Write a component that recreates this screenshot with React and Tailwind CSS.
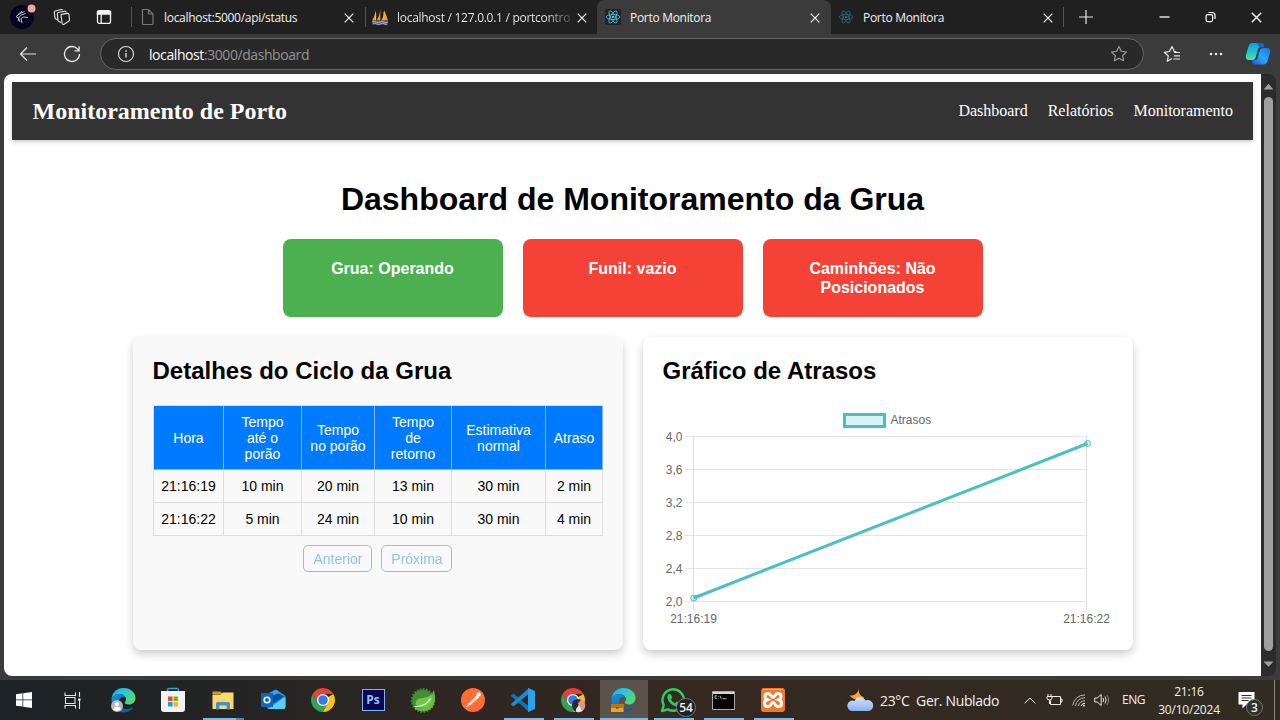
import React from "react";

const X = ({ s = 10, w = 1.2 }) => (
  <svg width={s} height={s} viewBox="0 0 10 10" className="shrink-0">
    <path d="M.7 .7L9.3 9.3M9.3 .7L.7 9.3" stroke="#f0f0f0" strokeWidth={w} fill="none" />
  </svg>
);

const ReactMark = ({ dim, bg }) => (
  <svg width="16" height="16" viewBox="0 0 16 16" className="shrink-0">
    {bg && <rect width="16" height="16" rx="2" fill="#20232a" />}
    <g stroke={dim ? "#2f6673" : "#58c4dc"} strokeWidth=".8" fill="none">
      <ellipse cx="8" cy="8" rx="6.8" ry="2.6" />
      <ellipse cx="8" cy="8" rx="6.8" ry="2.6" transform="rotate(60 8 8)" />
      <ellipse cx="8" cy="8" rx="6.8" ry="2.6" transform="rotate(120 8 8)" />
    </g>
    <circle cx="8" cy="8" r="1.3" fill={dim ? "#2f6673" : "#58c4dc"} />
  </svg>
);

function TabStrip() {
  return (
    <div className="flex h-[34px] items-center bg-[#202020] text-[12px] tracking-[-0.3px] text-[#f2f2f2]">
      <div className="flex w-[131px] shrink-0 items-center pl-[10px]">
        <svg width="26" height="26" viewBox="0 0 26 26" className="shrink-0">
          <circle cx="12" cy="13" r="12" fill="#05031d" />
          <g fill="none" stroke="#c4c4cc" strokeWidth="1">
            <path d="M14.500 7.500L10 9.500l-4 3 2 1.500M15.500 9.500l-4.500 1.700-2.500 2.800 1.500 4M18 13.500l-4.500-.5-2.500 1.500 1 4.500M12 7l-4 3.500M9 13l-1 4" />
          </g>
          <circle cx="21.500" cy="4.500" r="4" fill="#f0a8a4" />
        </svg>
        <svg width="18" height="18" viewBox="0 0 18 18" className="ml-[17px] shrink-0" fill="none" stroke="#e6e6e6" strokeWidth="1.100" strokeLinejoin="round">
          <path d="M9.300 6.100l5.200-.7c.9-.1 1.400.4 1.500 1.100l.5 5.300c.1.700-.3 1.200-.9 1.500l-4.500 2.900c-.8.500-1.700.2-1.900-.7L8.100 7.800c-.2-1 .2-1.600 1.200-1.700z" />
          <path d="M8 14.400l-2-.9c-.6-.2-.9-.7-1-1.200L4.300 6c-.1-.8.200-1.300 1-1.500l6.200-1.300c.9-.2 1.500.3 1.700 1.300" />
          <path d="M4.700 12l-1.800-.9c-.5-.3-.8-.7-.9-1.300l-.7-5.300c-.1-.8.2-1.300 1-1.500l5.800-1.500c.8-.2 1.300.1 1.600.8" />
        </svg>
        <svg width="16" height="16" viewBox="0 0 16 16" className="ml-[25px] shrink-0" fill="none" stroke="#f4f4f4" strokeWidth="1.300">
          <rect x="1.500" y="1.600" width="13" height="12.800" rx="2" />
          <path d="M1.500 2.500h13v2.600h-13z" fill="#f4f4f4" />
          <path d="M5.200 5v9" />
        </svg>
      </div>
      <div className="flex w-[234px] shrink-0 items-center border-l border-[#555] h-5 pl-[8px]">
        <svg width="16" height="18" viewBox="0 0 16 18" className="shrink-0" fill="none" stroke="#777" strokeWidth="1.200">
          <path d="M2.500 1.500h6l4.500 4.500v9.500q0 1-1 1h-8.500q-1 0-1-1zM8.500 1.500v4.500h4.500" />
        </svg>
        <span className="ml-2 w-[180px] whitespace-nowrap pt-px">localhost:5000/api/status</span>
        <span className="flex pt-px"><X /></span>
      </div>
      <div className="flex w-[232px] shrink-0 items-center border-l border-[#555] h-5 pl-[5px]">
        <svg width="18" height="18" viewBox="0 0 18 18" className="shrink-0">
          <path d="M1 12.500C2.800 9.500 4.200 6 5 2v10.500zM5.700 12.500C8 8.500 9 5 9.300 .8v11.700zM10.200 12.500c2-3 2.700-6.500 2.800-10.500C14.500 5 16 9 17 12.500z" fill="#f09a22" />
          <path d="M4.700 5v7M13 4v8" stroke="#ffd57c" strokeWidth=".7" />
          <path d="M1 12.800h16l-1 3.700H2z" fill="#4e5a90" />
          <path d="M1 14q2-1.500 4 0t4 0 4 0 4 0M1.500 16q2-1.500 4 0t4 0 4 0 3 0" stroke="#b6bde0" strokeWidth=".9" fill="none" />
        </svg>
        <span className="ml-[8px] w-[174px] whitespace-nowrap bg-gradient-to-r from-[#f2f2f2] from-85% to-[#4a4a4a] to-100% bg-clip-text pt-px tracking-[-0.28px] text-transparent">localhost / 127.0.0.1 / portcontro</span>
        <span className="ml-[6px] flex pt-px"><X /></span>
      </div>
      <div className="flex h-[34px] w-[234px] shrink-0 items-center rounded-t-lg bg-[#3b3b3b] pl-[8px]">
        <ReactMark bg />
        <span className="ml-[9px] w-[180px] whitespace-nowrap pt-px">Porto Monitora</span>
        <span className="flex pt-px"><X /></span>
      </div>
      <div className="flex h-5 w-[233px] shrink-0 items-center border-r border-[#555] pl-[7px]">
        <ReactMark dim />
        <span className="ml-[9px] w-[180px] whitespace-nowrap pt-px">Porto Monitora</span>
        <span className="flex pt-px"><X /></span>
      </div>
      <svg width="14" height="14" viewBox="0 0 14 14" className="ml-[15px] shrink-0"><path d="M7 0v14M0 7h14" stroke="#e8e8e8" strokeWidth="1.200" /></svg>
      <svg width="11" height="10" viewBox="0 0 11 10" className="ml-[66px] shrink-0"><path d="M.5 5h10" stroke="#fff" strokeWidth="1.300" /></svg>
      <svg width="11" height="12" viewBox="0 0 11 12" className="ml-[35px] shrink-0" fill="none" stroke="#fff" strokeWidth="1.200">
        <rect x="1.100" y="3.600" width="6.500" height="7" rx="1.500" /><path d="M3.500 1.500h3.500q3 0 3 3v3.500" />
      </svg>
      <span className="ml-[35px] flex"><X s={11} w={1.4} /></span>
    </div>
  );
}

const STAR = "M9 1.600l2.250 4.700 5.150.7-3.750 3.600.9 5.100L9 13.250 4.450 15.700l.9-5.100L1.600 7l5.150-.7z";

function AddressBar() {
  return (
    <div className="flex h-[40px] items-center bg-[#3b3b3b]">
      <svg width="18" height="16" viewBox="0 0 18 16" className="ml-[19px] shrink-0" fill="none" stroke="#e6e6e6" strokeWidth="1.200"><path d="M17 8H1.500M8 1.500L1.500 8 8 14.500" /></svg>
      <svg width="18" height="18" viewBox="0 0 18 18" className="ml-[26px] shrink-0" fill="none" stroke="#e6e6e6" strokeWidth="1.300"><path d="M16.500 9A7.500 7.500 0 1 1 14.600 4l1.400 1.700M16.100 1.200v4.700h-4.600" /></svg>
      <div className="ml-[19px] flex h-[32px] w-[1044px] shrink-0 items-center rounded-full border border-[#666] bg-[#292929] pl-[16px] pr-[15px]">
        <svg width="18" height="18" viewBox="0 0 18 18" fill="none" stroke="#dcdcdc" strokeWidth="1.100" className="shrink-0"><circle cx="9" cy="9" r="7.500" /><path d="M9 8v4.600M9 5.200v1.500" strokeWidth="1.400" /></svg>
        <span className="ml-[14px] grow whitespace-nowrap text-[14px] tracking-[-0.42px] text-[#949494]"><span className="text-white">localhost</span>:3000/dashboard</span>
        <svg width="18" height="18" viewBox="0 0 18 18" fill="none" stroke="#a0a0a0" strokeWidth="1.100" strokeLinejoin="round"><path d={STAR} /></svg>
      </div>
      <svg width="18" height="18" viewBox="0 0 18 18" className="ml-[19px] shrink-0" fill="none" stroke="#e8e8e8" strokeWidth="1.200" strokeLinejoin="round">
        <path d="M9 13.600L4.300 16.300l1-5.300L1.300 7.300l5.100-.8L9 1.600l2.300 4.900h2M11 7.500h6M11 10.800h6M10.500 14h6.500" />
      </svg>
      <svg width="16" height="4" viewBox="0 0 16 4" className="ml-[27px] shrink-0" fill="#e8e8e8"><circle cx="3" cy="2" r="1.300" /><circle cx="8" cy="2" r="1.300" /><circle cx="13" cy="2" r="1.300" /></svg>
      <svg width="26" height="24" viewBox="0 0 26 24" className="ml-[21px] shrink-0">
        <defs>
          <linearGradient id="cpA" x1="0" y1="0" x2="0" y2="1"><stop stopColor="#169ce5" /><stop offset=".6" stopColor="#22c9d0" /><stop offset="1" stopColor="#65dc8f" /></linearGradient>
          <linearGradient id="cpB" x1="1" y1="0" x2="0" y2="1"><stop stopColor="#1b6fe0" /><stop offset=".5" stopColor="#2aa8ff" /><stop offset="1" stopColor="#1459d4" /></linearGradient>
        </defs>
        <path d="M8 1h8c2 0 2.500 1.500 3 4h-3c-2 0-2.700 1-3.200 3l-1.800 7c-.5 2-1.500 3-3.500 3H4c-3 0-3.500-2.500-3-5l2.500-8.500C4.300 2 5.500 1 8 1z" fill="url(#cpA)" />
        <path d="M12 1h4c2 0 2.500 1.500 3 4h-3.500c-2 0-2.500-1-3.500-4z" fill="#0c6dc8" />
        <path d="M18 6h4c3 0 3.600 2.500 3 5l-2.500 8c-.8 2.500-2 3.500-4.500 3.500h-8c-2 0-2.500-1.500-3-4.500h2.500c2 0 2.700-1 3.200-3l1.800-6c.5-2 1.500-3 3.500-3z" fill="url(#cpB)" />
        <path d="M12.800 8.500c.5-1.800 1.500-2.500 3.200-2.500h2c-2 0-3 1-3.500 3l-1.800 6c-.5 2-1.200 3-3.200 3H8c1.800-.2 2.600-1.200 3-3z" fill="#38404c" />
      </svg>
    </div>
  );
}

const columns = [
  { lines: ["Hora"], w: "w-[70px]" },
  { lines: ["Tempo", "até o", "porão"], w: "w-[78px]" },
  { lines: ["Tempo", "no porão"], w: "w-[73px]" },
  { lines: ["Tempo", "de", "retorno"], w: "w-[77px]" },
  { lines: ["Estimativa", "normal"], w: "w-[94px]" },
  { lines: ["Atraso"], w: "w-[57px]" },
];
const rows = [
  ["21:16:19", "10 min", "20 min", "13 min", "30 min", "2 min"],
  ["21:16:22", "5 min", "24 min", "10 min", "30 min", "4 min"],
];

function CycleTable() {
  return (
    <table className="mt-[20px] w-[450px] table-fixed border-separate border-spacing-0 border-t border-l border-[#ddd] text-center text-[14px] leading-[16px]">
      <thead>
        <tr className="h-[64px] bg-[#007bff] text-white">
          {columns.map(({ lines, w }) => (
            <th key={lines.join(" ")} className={`${w} border-r border-b border-[#ddd]/60 p-0 pl-px font-normal`}>
              {lines.map((l) => <div key={l}>{l}</div>)}
            </th>
          ))}
        </tr>
      </thead>
      <tbody>
        {rows.map((r) => (
          <tr key={r[0]} className="h-[33px]">
            {r.map((c, i) => <td key={i} className="border-r border-b border-[#ddd] p-0 pl-px">{c}</td>)}
          </tr>
        ))}
      </tbody>
    </table>
  );
}

const ticks = [["4,0", 436.5], ["3,6", 469.8], ["3,2", 502.7], ["2,8", 535.6], ["2,4", 568.9], ["2,0", 601.8]];

function DelayChart() {
  return (
    <svg width="450" height="225" viewBox="663 405 450 225" className="mt-[20px] block" fontFamily="Liberation Sans, Arial, sans-serif" fontSize="12" fill="#666">
      <rect x="844.500" y="414.500" width="40" height="12" fill="#dbf2f2" stroke="#4bc0c0" strokeWidth="3" />
      <text x="890.500" y="424">Atrasos</text>
      {ticks.map(([t, y]) => (
        <g key={t}>
          <path d={`M685 ${Math.floor(y) + 0.5}H1087`} stroke="#e5e5e5" />
          <text x="682.500" y={Math.round(y) + 3.500} textAnchor="end">{t}</text>
        </g>
      ))}
      <path d="M693.500 436.500V610M1086.500 436.500V610" stroke="#dedede" />
      <path d="M693.800 598L1087.500 443.500" stroke="#4bc0c0" strokeWidth="3" />
      <g fill="#4bc0c0" fillOpacity=".2" stroke="#4bc0c0"><circle cx="693.800" cy="598" r="3" /><circle cx="1087.500" cy="443.500" r="3" /></g>
      <text x="693.500" y="623" textAnchor="middle">21:16:19</text>
      <text x="1086.500" y="623" textAnchor="middle">21:16:22</text>
    </svg>
  );
}

const statuses = [
  ["Grua: Operando", "bg-[#4caf50]"],
  ["Funil: vazio", "bg-[#f44336]"],
  ["Caminhões: Não Posicionados", "bg-[#f44336]"],
];

function Page() {
  return (
    <div className="h-[602px] w-[1257px] shrink-0 overflow-hidden rounded-l-[8px] bg-white px-[8px] pt-[8px] text-black">
      <header className="flex h-[58px] items-center justify-between bg-[#333] pr-[20px] pl-[20.5px] font-['Liberation_Serif',serif] text-white shadow-[0_2px_4px_rgba(0,0,0,0.2)]">
        <span className="text-[24px] font-bold">Monitoramento de Porto</span>
        <nav className="flex gap-[20px] text-[16px]"><a>Dashboard</a><a>Relatórios</a><a>Monitoramento</a></nav>
      </header>
      <main className="flex flex-col items-center font-['Liberation_Sans',Arial,sans-serif]">
        <h1 className="mt-[39px] h-[40px] whitespace-nowrap text-[32px] leading-[40px] font-bold">Dashboard de Monitoramento da Grua</h1>
        <div className="mt-[20px] flex gap-[20px]">
          {statuses.map(([t, c]) => (
            <div key={t} className={`${c} h-[78px] w-[220px] rounded-[8px] px-[20px] pt-[20px] text-center text-[16px] leading-[19px] font-bold text-white`}>{t}</div>
          ))}
        </div>
        <div className="mt-[20px] flex gap-[20px]">
          <section className="h-[313px] w-[490px] rounded-[8px] bg-[#f9f9f9] p-[20px] shadow-[0_4px_8px_rgba(0,0,0,0.2)]">
            <h2 className="h-[28px] text-[24px] leading-[28px] font-bold">Detalhes do Ciclo da Grua</h2>
            <CycleTable />
            <div className="mt-[9px] flex justify-center gap-[9px] text-[14px] leading-[24px] text-[#007bff] opacity-45">
              <button className="h-[27px] w-[69px] rounded-[5px] border border-[#007bff] pl-px">Anterior</button>
              <button className="h-[27px] w-[71px] rounded-[5px] border border-[#007bff] pl-px">Próxima</button>
            </div>
          </section>
          <section className="h-[313px] w-[490px] rounded-[8px] bg-white p-[20px] shadow-[0_4px_8px_rgba(0,0,0,0.2)]">
            <h2 className="h-[28px] text-[24px] leading-[28px] font-bold">Gráfico de Atrasos</h2>
            <DelayChart />
          </section>
        </div>
      </main>
    </div>
  );
}

function ScrollBar() {
  return (
    <div className="flex h-[602px] w-[15px] shrink-0 flex-col items-center justify-between rounded-r-[8px] bg-[#2b2b2b] py-[9px]">
      <svg width="11" height="7" viewBox="0 0 11 7"><path d="M.5 6.500L5.500.7l5 5.800z" fill="#9f9f9f" /></svg>
      <div className="mt-[7px] mb-[9px] w-[9px] grow rounded-full bg-[#9f9f9f]" />
      <svg width="11" height="7" viewBox="0 0 11 7"><path d="M.5 1.500L5.500 6.800l5-5.300z" fill="#9f9f9f" /></svg>
    </div>
  );
}

const EdgeIcon = ({ id, children }) => (
  <svg width="26" height="26" viewBox="0 0 26 26">
    <defs>
      <linearGradient id={id + "a"} x1="0" y1="0" x2="1" y2=".5"><stop stopColor="#2aa8e8" /><stop offset=".55" stopColor="#2fc7d8" /><stop offset="1" stopColor="#58d66c" /></linearGradient>
      <linearGradient id={id + "b"} x1="0" y1="0" x2="1" y2="1"><stop stopColor="#1597df" /><stop offset="1" stopColor="#0c4e9c" /></linearGradient>
    </defs>
    <path d="M1.500 12C2 5.500 7 1 13.500 1 20.500 1 25.500 5.500 25.500 11c0 4-3 6.500-6.500 6.500-3 0-4.800-1-4.300-2.200.8-1 1.300-2 1.300-3C16 9 12.500 7 9 7c-3.500 0-6 1.800-7.500 5z" fill={`url(#${id}a)`} />
    <path d="M1.500 12C3 8.500 5.500 7 9 7c2.800 0 5 1 6.200 3-4.700-.5-6.700 2.500-6.200 6 .6 4.500 5 6.800 9.500 5.800 2-.5 4-1.500 4.500-1.200.5.500-2.500 4.500-8.500 4.900C7 25.700 1 20 1.500 12z" fill={`url(#${id}b)`} />
    {children}
  </svg>
);

const Chrome = ({ children }) => (
  <svg width="26" height="26" viewBox="0 0 26 26">
    <path d="M13 13L23.390 7A12 12 0 0 1 13 25z" fill="#fbc116" />
    <path d="M13 7.000h10.390A12 12 0 0 0 2.610 7l5 8.500z" fill="#e94235" />
    <path d="M18.200 16L13 25A12 12 0 0 1 2.610 7L7.800 16 13 19z" fill="#32a350" />
    <circle cx="13" cy="13" r="6.100" fill="#fff" /><circle cx="13" cy="13" r="4.800" fill="#3b78e7" />
    {children}
  </svg>
);

const apps = [
  { id: "edge", icon: <EdgeIcon id="e1"><circle cx="7" cy="19" r="6" fill="#b8b8b8" /><circle cx="7" cy="17.200" r="2" fill="#fff" /><path d="M3.200 22.300q0-2.500 3.800-2.500t3.800 2.500a5 5 0 0 1-7.600 0z" fill="#fff" /></EdgeIcon> },
  { id: "store", icon: (
    <svg width="26" height="26" viewBox="0 0 26 26"><path d="M7.500 5V3q0-1.500 1.500-1.500h8q1.500 0 1.500 1.500v2" fill="none" stroke="#27a2da" strokeWidth="1.500" /><path d="M1 4h24v18q0 3-3 3H4q-3 0-3-3z" fill="#f2f2f2" /><path d="M8 9.500h4.500V14H8z" fill="#e64a22" /><path d="M13.500 9.500H18V14h-4.500z" fill="#7ab51d" /><path d="M8 15h4.500v4.500H8z" fill="#10a0e6" /><path d="M13.500 15H18v4.500h-4.500z" fill="#f9b516" /></svg>) },
  { id: "files", open: "double", icon: (
    <svg width="24" height="24" viewBox="0 0 24 24"><path d="M1.500 3.500h8l2 2.500h-10z" fill="#d69a1c" /><path d="M1.500 6.500h8L12 4.500h10.500V21H1.500z" fill="#ffd96b" /><path d="M5 21.500v-6q0-1.500 1.500-1.500h11q1.500 0 1.500 1.500v6h-3.500v-4h-7v4z" fill="#3f91cf" /></svg>) },
  { id: "mail", icon: (
    <svg width="26" height="26" viewBox="0 0 26 26"><path d="M5 8l11-5.500L25.500 9 20 15z" fill="#1581d4" /><path d="M9 6l7-3.500 9 6.500-5 4z" fill="#2da5e8" /><path d="M7 11h18.500v9q0 2-2 2H9q-2 0-2-2z" fill="#1d8fe0" /><path d="M25.500 9.500v10q0 2.500-2 2.500H8z" fill="#58d0f2" /><path d="M10 9l9-2.500 5 3L11 18z" fill="#0c4f9c" /><path d="M1 6h12v14H2.500Q1 20 1 18.500z" fill="#1066b8" /><circle cx="7" cy="13" r="2.800" fill="none" stroke="#fff" strokeWidth="1.600" /></svg>) },
  { id: "chrome", icon: <Chrome /> },
  { id: "photo", icon: <span className="flex h-[22px] w-[23px] items-center justify-center border-[1.5px] border-[#78b8f0] bg-[#0a0653] text-[12px] font-bold text-[#8cc4f8]">Ps</span> },
  { id: "leaf", icon: (
    <svg width="26" height="26" viewBox="0 0 26 26"><circle cx="13" cy="13.500" r="10.800" fill="#3f8f35" /><circle cx="13" cy="13.500" r="11.300" fill="none" stroke="#3f8f35" strokeWidth="2" strokeDasharray="1.700 1.400" /><path d="M23.500 3C26 9 25.500 16 22 20.500 18 25 9 25.500 4 21c12 .5 17-7 19.500-18z" fill="#68b842" /><path d="M21.500 7c1.500 6 .3 11-5 12.500-3.500 1-8 .3-10.500-1.500-1-5 2-6.500 7-7 3.500-.3 6.500-1.500 8.500-4z" fill="#74c64b" /><path d="M4.500 19.500c7 .6 12.500-2 16-8" fill="none" stroke="#eef8e6" strokeWidth="1.200" /></svg>) },
  { id: "rocket", icon: (
    <svg width="26" height="26" viewBox="0 0 26 26"><circle cx="13" cy="13" r="12" fill="#ff6c37" /><path d="M8.500 16.500l8.500-8 1.500 2-8.500 7.500zM6 20l3.500-3" fill="#fff" stroke="#fff" strokeWidth="1" /><circle cx="18.700" cy="7.500" r="2.200" fill="#fff" /><path d="M10 15.700l6-5.200M11.500 16.800l5-4.500" stroke="#ff6c37" strokeWidth=".6" /></svg>) },
  { id: "code", open: "single", icon: (
    <svg width="26" height="26" viewBox="0 0 26 26"><path d="M1 8.500l2.500-2L19 19.500V25L1.500 9.500z" fill="#1273b8" /><path d="M1 17.500l2.500 2L19 6.500V1L1.500 16.500z" fill="#1b8bd2" /><path d="M18 1l7 3v18l-7 3V1z" fill="#2ba3ec" /></svg>) },
  { id: "chrome2", open: "single", icon: <Chrome><circle cx="18.500" cy="18.500" r="6.800" fill="#e59783" /><path d="M18 12q-6 0-6 6 0 5 4 7l3-4-1-5 3-3z" fill="#292b35" /><path d="M16 22l3-4 3 6q-3 2-6 .5z" fill="#dce7ee" /></Chrome> },
  { id: "edge2", open: "active", icon: <EdgeIcon id="e2"><path d="M1 17h12.500v8H1z" fill="#e8a82c" /><path d="M1 17h12.500v4H1z" fill="#bc7411" /><path d="M6 21h2.500" stroke="#5b3308" fill="none" /></EdgeIcon> },
  { id: "chat", open: "single", badge: "54", icon: (
    <svg width="26" height="26" viewBox="0 0 26 26"><path d="M2 24l1.700-6A10.700 10.700 0 1 1 8 22.400z" fill="none" stroke="#2ccc61" strokeWidth="2.400" strokeLinejoin="round" /><path d="M9 7l1.800.2 1.400 3.200-1.200 1.800c1 2 2 3 4 4l1.700-1.600 3 1.500c0 3-2.700 3.700-4.500 3.200C11.500 18 8.500 15 7.500 11.500 7 9 7.800 7.500 9 7z" fill="#2ccc61" /></svg>) },
  { id: "term", open: "single", icon: (
    <svg width="23" height="19" viewBox="0 0 23 19"><path d="M.5 .5h22v18H.5z" fill="#050505" stroke="#aaa" /><path d="M1 1h21v2H1z" fill="#d7d7d7" /><path d="M5 4.800H3v2.500h2M6.500 5v.7M6.500 7v.5M8 4.800l1.300 3M10.500 7.700h4" fill="none" stroke="#ddd" strokeWidth=".8" /></svg>) },
  { id: "xampp", open: "single", icon: (
    <svg width="26" height="26" viewBox="0 0 26 26"><rect x="1" y="1" width="24" height="24" rx="3" fill="#f0792b" /><path d="M3 2.500h20" stroke="#ffb077" /><path d="M8 6.500c-4 0-3.800 5-.8 6.200-4 1.300-3.500 6.800.5 6.800 3.800 0 3-4 5.300-4s1.500 4 5.300 4c4 0 4.500-5.500.5-6.800 3-1.200 3.200-6.200-.8-6.200-3.500 0-3 3.800-5 3.800s-1.500-3.800-5-3.800z" fill="none" stroke="#fff" strokeWidth="3" /></svg>) },
];

function TaskBar() {
  return (
    <footer className="flex h-[40px] bg-gradient-to-r from-[#1b2226] via-[#352820] to-[#302c22] text-[#f1f1f1]">
      <div className="flex w-[48px] shrink-0 items-center justify-center">
        <svg width="16" height="16" viewBox="0 0 16 16" fill="#fff"><path d="M0 2.200l6.500-.9v6.200H0zM7.200 1.200L16 0v7.500H7.200zM0 8.300h6.500v6.300L0 13.700zM7.200 8.300H16V16l-8.800-1.300z" /></svg>
      </div>
      <div className="flex w-[50px] shrink-0 items-center justify-center pr-[2px]">
        <svg width="17" height="17" viewBox="0 0 17 17" fill="none" stroke="#e5e5e5" strokeWidth="1.100"><path d="M1 .5v3h10.500v-3M1 16.500v-3h10.500v3M1.500 5.500h9.500v6H1.500zM15.500 0v5M15.500 9v8" /><path d="M14.200 6.500h2.300v2.300h-2.300z" fill="#fff" stroke="none" /></svg>
      </div>
      {apps.map((a) => (
        <div key={a.id} className={`relative flex shrink-0 items-center justify-center ${a.open === "active" ? "ml-[2px] w-[48px] bg-[#5b524c] pr-[2px]" : "w-[50px]"}`}>
          {a.icon}
          {a.open === "single" && <i className="absolute bottom-0 left-[6px] h-[2px] w-[40px] bg-[#76b9ed]" />}
          {a.open === "active" && <i className="absolute bottom-0 left-0 h-[2px] w-[48px] bg-[#76b9ed]" />}
          {a.open === "double" && <i className="absolute bottom-0 left-[5px] h-[2px] w-[41px] border-r-[8px] border-[#5585aa] bg-[#76b9ed]" />}
          {a.badge && <b className="absolute top-[18px] left-[28px] flex h-[19px] w-[20px] items-center justify-center rounded-full border border-[#777] bg-[#222] text-[12px] font-semibold">{a.badge}</b>}
        </div>
      ))}
      <div className="ml-[49px] flex w-[152px] shrink-0 items-center">
        <svg width="26" height="26" viewBox="0 0 26 26" className="shrink-0">
          <defs><linearGradient id="cl" x1="0" y1="0" x2="0" y2="1"><stop stopColor="#d5e3fb" /><stop offset="1" stopColor="#8bb1ec" /></linearGradient></defs>
          <path d="M12 1c-1 5 1.500 8.500 5 9-4 5-12 2-14.500-1.500C8 9 11 6 12 1z" fill="#f5a92c" />
          <path d="M6 24a5.200 5.200 0 1 1 1.500-10A6 6 0 0 1 18.500 13.500 5.500 5.500 0 1 1 20 24z" fill="url(#cl)" />
        </svg>
        <span className="ml-[7px] whitespace-pre text-[14px] tracking-[-0.34px]">23°C  Ger. Nublado</span>
      </div>
      <div className="ml-[25px] flex shrink-0 items-center">
        <svg width="12" height="7" viewBox="0 0 12 7" fill="none" stroke="#eee"><path d="M.7 6.300L6 1l5.300 5.300" /></svg>
        <svg width="17" height="14" viewBox="0 0 17 14" className="ml-[10px]" fill="none" stroke="#eee"><path d="M6 3.500h8.500v8h-10v-4M14.500 6h1.500v3h-1.500M1 3.500h5v1.500q0 2-2.500 2T1 5zM2 1v2.500M5 1v2.500M3.500 7v4" /></svg>
        <svg width="14" height="14" viewBox="0 0 14 14" className="ml-[9px]" fill="none" stroke="#b9b9b5"><path d="M.8 12.500A11.700 11.700 0 0 1 13 2M3.500 13A9 9 0 0 1 13 4.800M6.300 13A6.300 6.300 0 0 1 13 7.800" /><path d="M9 13a4 4 0 0 1 4-2.700" stroke="#fff" /><circle cx="12" cy="12.700" r=".9" fill="#fff" stroke="none" /></svg>
        <svg width="16" height="14" viewBox="0 0 16 14" className="ml-[8px]" fill="none" stroke="#e5e5e5"><path d="M.7 5h2.500l4-3.500v11L3.200 9H.7zM9 5q1.200 2 0 4M11 3.500q2.300 3.500 0 7" /><path d="M13 2q3.300 5 0 10" stroke="#888" /></svg>
        <span className="ml-[12px] w-[23px] text-[12px] tracking-[-0.5px]">ENG</span>
      </div>
      <div className="ml-[9px] flex w-[70px] shrink-0 flex-col items-center justify-center pt-[2px] text-[12px] leading-[18px] tracking-[-0.2px]"><span>21:16</span><span>30/10/2024</span></div>
      <div className="relative ml-[14px] flex w-[37px] shrink-0 items-start border-r border-[#8a8680] pt-[12px]">
        <svg width="17" height="17" viewBox="0 0 17 17"><path d="M.5 0h16v12.500h-8l-4 4v-4h-4z" fill="#fff" /><path d="M3.500 3.500h10M3.500 6h10M3.500 8.500h7" stroke="#302c22" /></svg>
        <b className="absolute top-[19px] left-[8px] flex h-[17px] w-[17px] items-center justify-center rounded-full border border-[#777] bg-[#30302f] text-[12px] font-semibold">3</b>
      </div>
    </footer>
  );
}

export default function App() {
  return (
    <div className="flex h-[720px] w-[1280px] flex-col overflow-hidden bg-[#3b3b3b] font-['Open_Sans','Noto_Sans',sans-serif]">
      <TabStrip />
      <AddressBar />
      <div className="mb-[4px] flex h-[602px] shrink-0 pl-[4px]">
        <Page />
        <ScrollBar />
      </div>
      <TaskBar />
    </div>
  );
}
